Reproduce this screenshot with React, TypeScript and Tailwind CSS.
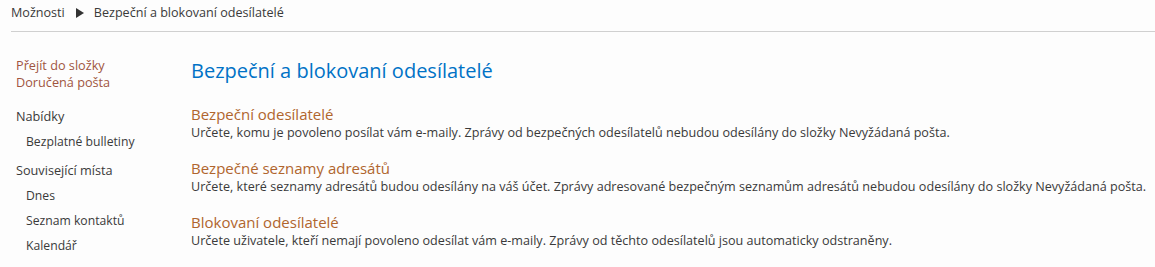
import React from 'react';

const font = { fontFamily: '"Segoe UI", "Open Sans", "Noto Sans", sans-serif' };

const navGroups = [
  { title: 'Nabídky', items: ['Bezplatné bulletiny'] },
  { title: 'Související místa', items: ['Dnes', 'Seznam kontaktů', 'Kalendář'] },
];

const sections = [
  {
    title: 'Bezpeční odesílatelé',
    text: 'Určete, komu je povoleno posílat vám e-maily. Zprávy od bezpečných odesílatelů nebudou odesílány do složky Nevyžádaná pošta.',
  },
  {
    title: 'Bezpečné seznamy adresátů',
    text: 'Určete, které seznamy adresátů budou odesílány na váš účet. Zprávy adresované bezpečným seznamům adresátů nebudou odesílány do složky Nevyžádaná pošta.',
  },
  {
    title: 'Blokovaní odesílatelé',
    text: 'Určete uživatele, kteří nemají povoleno odesílat vám e-maily. Zprávy od těchto odesílatelů jsou automaticky odstraněny.',
  },
];

const App: React.FC = () => {
  return (
    <div className="min-h-[267px] w-full bg-[#fdfdfd] text-[#3a3a3a]" style={font}>
      <div className="ml-[11px] flex h-[32px] items-center gap-[8px] border-b border-[#d0d0d0] pb-[5px] text-[12.6px]">
        <span>Možnosti</span>
        <svg width="8" height="10" viewBox="0 0 8 10" className="ml-[3px] mr-[2px]">
          <path d="M0 0 L8 5 L0 10 Z" fill="#333333" />
        </svg>
        <span>Bezpeční a blokovaní odesílatelé</span>
      </div>

      <div className="flex">
        <nav className="w-[191px] shrink-0 pl-[16px] pt-[24.5px] text-[12.7px]">
          <div className="leading-[17px] text-[#a0553f]">
            <div>Přejít do složky</div>
            <div>Doručená pošta</div>
          </div>
          {navGroups.map((g, i) => (
            <div key={g.title} className={i === 0 ? 'mt-[17px]' : 'mt-[12px]'}>
              <div className="leading-[17px]">{g.title}</div>
              {g.items.map((item) => (
                <div key={item} className="mt-[8px] pl-[10px] text-[12.2px] leading-[17px]">
                  {item}
                </div>
              ))}
            </div>
          ))}
        </nav>

        <main className="flex-1 pt-[25px]">
          <h1 className="text-[20px] leading-[28px] text-[#0072c6]">Bezpeční a blokovaní odesílatelé</h1>
          <div className="mt-[19px] flex flex-col gap-[16px]">
            {sections.map((s) => (
              <div key={s.title}>
                <h2 className="text-[15px] leading-[20px] text-[#b0652e]">{s.title}</h2>
                <p className="text-[12.6px] leading-[18px]">{s.text}</p>
              </div>
            ))}
          </div>
        </main>
      </div>
    </div>
  );
};

export default App;
